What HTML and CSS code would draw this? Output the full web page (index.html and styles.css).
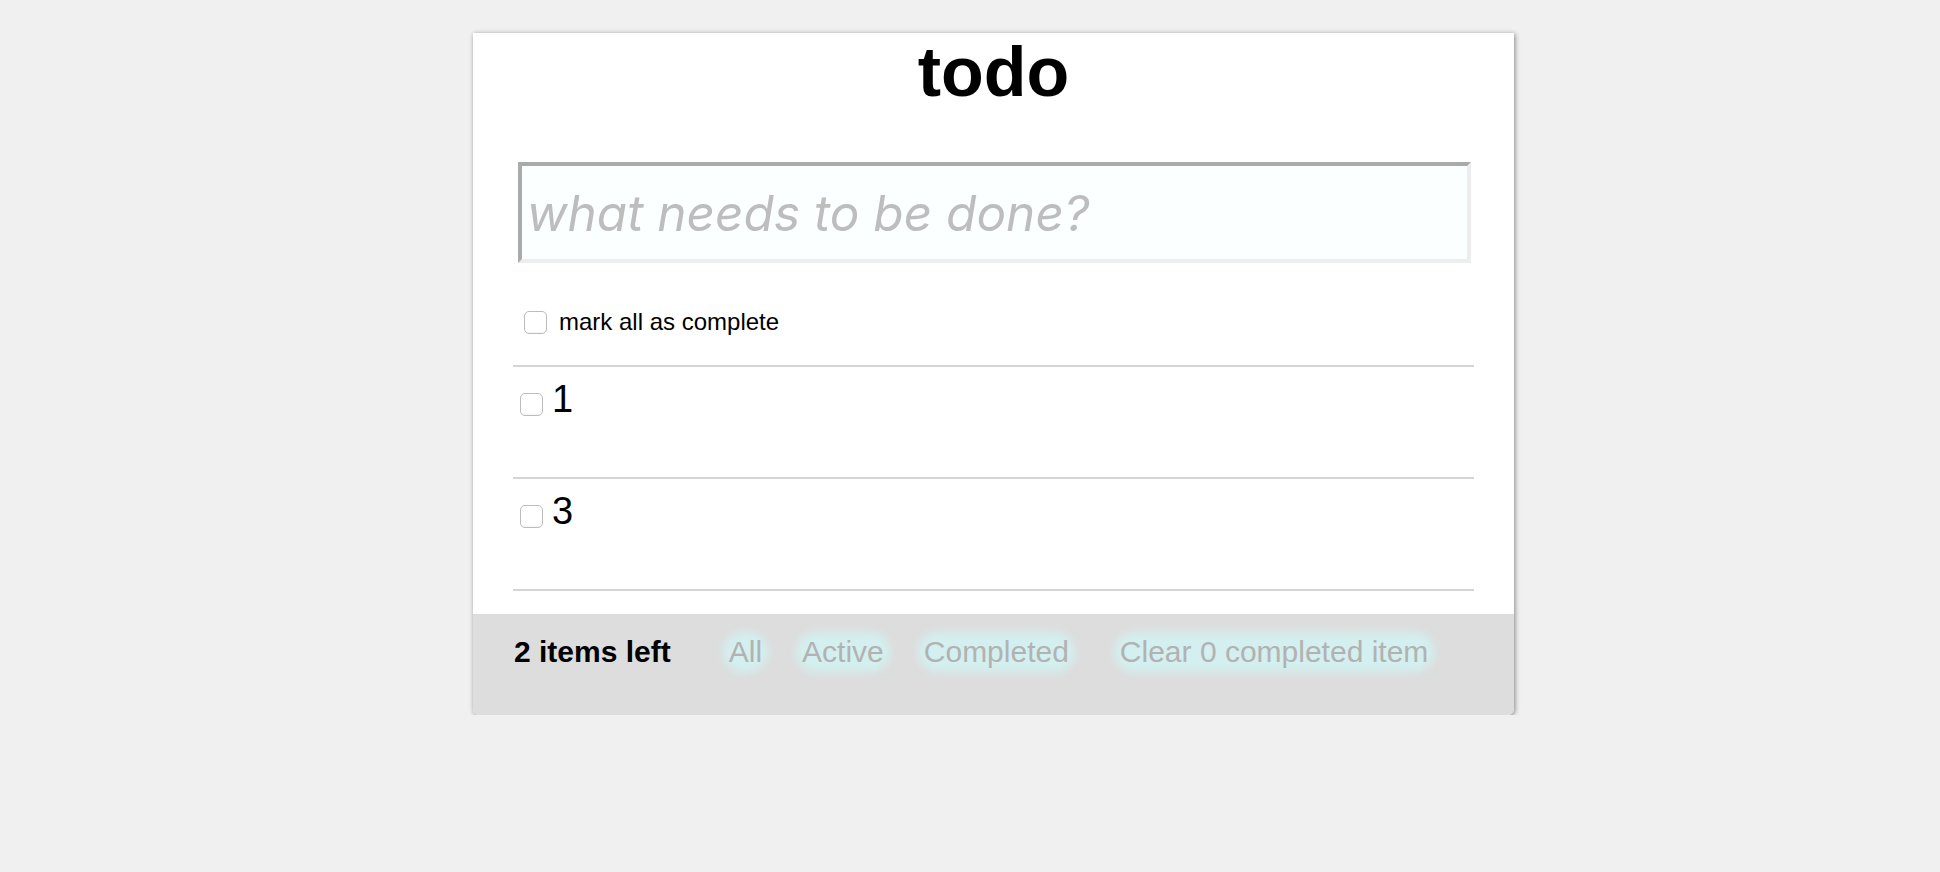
FILE: index.html
```html
<!DOCTYPE html>
<html lang="en">
<head>
<meta charset="utf-8">
<title>todo</title>
<link rel="stylesheet" href="styles.css">
</head>
<body>
<div class="page">
  <section class="card">
    <div class="main">
      <h1 class="title">todo</h1>
      <input class="new-todo" type="text" placeholder="what needs to be done?">
      <label class="toggle-all">
        <input type="checkbox" class="check">
        <span class="toggle-label">mark all as complete</span>
      </label>
      <ul class="todo-list">
        <li class="todo"><input type="checkbox" class="check item-check"><span class="todo-text">1</span></li>
        <li class="todo"><input type="checkbox" class="check item-check"><span class="todo-text">3</span></li>
      </ul>
    </div>
    <footer class="footer">
      <span class="count"><strong>2</strong> items left</span>
      <div class="filters">
        <a class="link">All</a>
        <a class="link">Active</a>
        <a class="link">Completed</a>
      </div>
      <a class="link clear">Clear 0 completed item</a>
    </footer>
  </section>
</div>
</body>
</html>
```
FILE: styles.css
```css
html, body {
  margin: 0;
  padding: 0;
  background: #f0f0f0;
  font-family: "Liberation Sans", Arial, sans-serif;
  color: #000;
}

.page {
  padding: 33px 0 0 473px;
}

.card {
  width: 1041px;
  background: #fff;
  border-radius: 0 0 6px 6px;
  box-shadow: 1px 1px 5px rgba(0, 0, 0, 0.45);
  overflow: hidden;
}

.main {
  padding: 0 40px 23px 40px;
}

.title {
  margin: 0;
  font-size: 70px;
  line-height: 78px;
  font-weight: 700;
  text-align: center;
}

.new-todo {
  display: block;
  box-sizing: border-box;
  width: calc(100% - 8px);
  height: 101px;
  margin: 51px 3px 0 5px;
  padding: 0 5px;
  border-style: solid;
  border-width: 4px;
  border-color: #a9abab #ededed #ededed #a9abab;
  background: #fcffff;
  font-family: Inter, "Liberation Sans", Arial, sans-serif;
  font-size: 49.5px;
  font-style: italic;
  color: #333;
  outline: none;
}

.new-todo::placeholder {
  color: #bdbdbd;
  font-style: italic;
}

.toggle-all {
  display: flex;
  align-items: center;
  gap: 12px;
  margin-top: 45px;
  padding-left: 11px;
  font-size: 24px;
  line-height: 28px;
}

.check {
  appearance: none;
  -webkit-appearance: none;
  box-sizing: border-box;
  width: 23px;
  height: 23px;
  margin: 0;
  border: 1px solid #bcbcbc;
  border-radius: 5px;
  background: #fff;
  box-shadow: inset 0 -1px 1px rgba(0, 0, 0, 0.04);
  flex: none;
}

.todo-list {
  list-style: none;
  margin: 29px 0 0 0;
  padding: 0;
  border-top: 2px solid #d4d4d4;
}

.todo {
  display: flex;
  align-items: flex-start;
  height: 110px;
  padding-left: 7px;
  border-bottom: 2px solid #d4d4d4;
}

.item-check {
  margin-top: 26px;
}

.todo-text {
  margin: 10px 0 0 9px;
  font-size: 38px;
  line-height: 44px;
}

.footer {
  display: flex;
  align-items: center;
  height: 101px;
  box-sizing: border-box;
  padding: 17px 0 42px 41px;
  background: #dddddd;
  font-size: 30px;
  line-height: 36px;
}

.count {
  font-weight: 700;
}

.filters {
  display: flex;
  gap: 24px;
  margin-left: 50px;
}

.link {
  position: relative;
  z-index: 0;
  display: block;
  padding: 3px 8px;
  color: #b2b2b2;
  cursor: pointer;
}

.link::before {
  content: "";
  position: absolute;
  inset: 1px 2px;
  z-index: -1;
  background: #d3efef;
  border-radius: 20px;
  filter: blur(4px);
}

.clear {
  margin-left: 35px;
}
```
